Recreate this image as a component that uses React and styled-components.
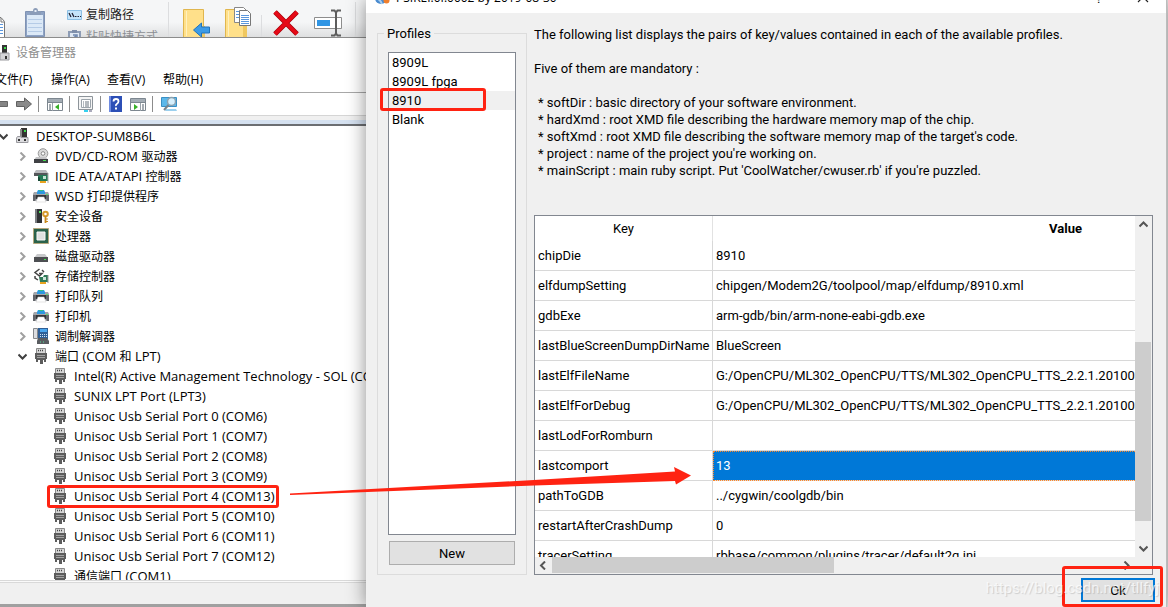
import React from 'react';
import styled, { createGlobalStyle, css } from 'styled-components';

const uiFont = '"Open Sans", "Noto Sans CJK SC", sans-serif';
const dialogFont = 'Roboto, "Noto Sans CJK SC", sans-serif';
const red = '#ff2312';

const GlobalStyle = createGlobalStyle`
  * { box-sizing: border-box; }
  body { margin: 0; background: #e9e9e9; color: #000; overflow: hidden; }
  button { font: inherit; color: inherit; }
  svg { display: block; flex: none; }
`;

/* ---------- page ---------- */

const Desktop = styled.div`
  position: relative;
  display: grid;
  grid-template-columns: 366px minmax(0, 1fr);
  height: 100vh;
  overflow: hidden;
`;

const Behind = styled.div`
  display: flex;
  flex-direction: column;
  min-width: 0;
  min-height: 0;
  overflow: hidden;
  background: #a0a0a0;
  font: 13px/20px ${uiFont};
`;

/* ---------- explorer ribbon ---------- */

const Ribbon = styled.div`
  display: flex;
  align-items: flex-start;
  flex: none;
  height: 38px;
  overflow: hidden;
  background: linear-gradient(#f5f6f7 60%, #dfe0e1);
  border-bottom: 1px solid #8c8c8c;
  font-size: 12px;
`;

const PasteIcons = styled.div`
  display: flex;
  gap: 18px;
  width: 67px;
`;

const RibbonCommands = styled.div`
  display: flex;
  flex-direction: column;
  gap: 2px;
  width: 101px;
  padding-top: 5px;
`;

const RibbonCommand = styled.button`
  display: flex;
  align-items: center;
  gap: 4px;
  height: 20px;
  padding: 0;
  border: 0;
  background: none;
  white-space: nowrap;
  color: ${(p) => (p.$muted ? '#8b8f94' : '#222')};
`;

const RibbonTools = styled.div`
  display: flex;
  padding-left: ${(p) => p.$lead}px;
`;

const RibbonTool = styled.button`
  width: ${(p) => p.$width}px;
  padding: 0;
  border: 0;
  background: none;
`;

const RibbonDivider = styled.span`
  width: 1px;
  height: 38px;
  margin-top: ${(p) => p.$top || 2}px;
  background: #dcdddf;
`;

/* ---------- device manager ---------- */

const Manager = styled.section`
  display: flex;
  flex-direction: column;
  flex: 1;
  min-height: 0;
  margin-bottom: 3px;
  background: #fff;
`;

const ManagerTitle = styled.header`
  display: flex;
  align-items: center;
  gap: 6px;
  height: 29px;
  padding-right: 8px;
  color: #8f8f8f;
  font-size: 12px;
`;

const MenuBar = styled.nav`
  display: flex;
  height: 26px;
  font-size: 12px;
  border-bottom: 1px solid #a8a8a8;
`;

const MenuItem = styled.button`
  width: 56px;
  padding: 2px 0;
  border: 0;
  background: none;
  text-align: left;
  line-height: 20px;
  white-space: nowrap;
`;

const MenuShift = styled.div`
  display: flex;
  margin-left: -5px;
`;

const ToolBar = styled.div`
  display: flex;
  align-items: center;
  height: 23px;
  border-bottom: 1px solid #d5d5d5;
`;

const ToolGroup = styled.div`
  display: flex;
  gap: 8px;
  padding: 0 6px 0 8px;
  & + & { border-left: 1px solid #8c8c8c; }
`;

const ToolButton = styled.button`
  padding: 0;
  border: 0;
  background: none;
`;

const TreeHeader = styled.div`
  height: 10px;
  background: linear-gradient(#f0f0f0 4px, #d5e1f0 4px);
  border-bottom: 2px solid #6c6e72;
  flex: none;
`;

const Tree = styled.ul`
  flex: 1;
  min-height: 0;
  margin: 0;
  padding: 0;
  overflow: hidden;
  list-style: none;
`;

const TreeRow = styled.li`
  position: relative;
  display: flex;
  align-items: center;
  height: 20px;
  padding-left: ${(p) => p.$level * 19}px;
  white-space: nowrap;
`;

const Expander = styled.span`
  display: flex;
  flex: none;
  width: 8px;
  margin-right: 6px;
  justify-content: flex-end;
`;

const TreeLabel = styled.span`
  padding-left: 6px;
`;

const Han = styled.span`
  font-size: 12px;
`;

const StatusBar = styled.footer`
  flex: none;
  height: 24px;
  background: #f0f0f0;
  border-top: 1px solid #d9d9d9;
  box-shadow: inset 0 1px #fafafa, inset 0 2px #d9d9d9;
`;

/* ---------- profile dialog ---------- */

const Dialog = styled.section`
  position: relative;
  display: flex;
  flex-direction: column;
  min-width: 0;
  min-height: 0;
  margin-right: 1px;
  background: #f0f0f0;
  border-right: 1px solid #bcbcbc;
  box-shadow: 0 0 18px rgba(0, 0, 0, 0.45);
  font: 13px/17px ${dialogFont};
`;

const DialogTitle = styled.header`
  display: flex;
  align-items: flex-end;
  justify-content: space-between;
  flex: none;
  height: 13px;
  padding: 0 16px 7px 8px;
  overflow: hidden;
  background: #fff;
`;

const TitleText = styled.div`
  display: flex;
  align-items: flex-end;
  gap: 6px;
  font: 12px/17px "Open Sans", sans-serif;
`;

const WindowButtons = styled.div`
  display: flex;
  gap: 34px;
  align-items: flex-end;
`;

const WindowButton = styled.button`
  padding: 0;
  border: 0;
  background: none;
  line-height: 14px;
`;

const DialogBody = styled.div`
  display: flex;
  gap: 7px;
  flex: 1;
  min-height: 0;
  padding: 12px 13px 0 11px;
`;

const ProfileBox = styled.fieldset`
  display: flex;
  flex-direction: column;
  gap: 6px;
  flex: none;
  width: 150px;
  min-width: 0;
  margin: 0;
  padding: 10px 10px 9px;
  border: 1px solid #dcdcdc;
`;

const Legend = styled.legend`
  margin-left: -4px;
  padding: 0 3px;
`;

const ProfileList = styled.ul`
  flex: 1;
  min-height: 0;
  margin: 0;
  padding: 0;
  list-style: none;
  background: #fff;
  border: 1px solid #828790;
`;

const Profile = styled.li`
  position: relative;
  height: 19px;
  padding-left: 3px;
  line-height: 19px;
  background: ${(p) => (p.$selected ? '#f0f0f0' : 'none')};
`;

const NewButton = styled.button`
  height: 24px;
  margin: 0 1px;
  padding: 0;
  background: #e1e1e1;
  border: 1px solid #adadad;
`;

const Details = styled.div`
  display: flex;
  flex-direction: column;
  gap: 36px;
  flex: 1;
  min-width: 0;
`;

const Help = styled.div`
  padding-top: 1px;
  white-space: nowrap;
`;

const HelpText = styled.p`
  margin: 0 0 17px;
`;

const HelpList = styled.ul`
  margin: 0;
  padding: 0 0 0 4px;
  list-style: none;
`;

const Grid = styled.div`
  display: grid;
  grid-template-columns: minmax(0, 1fr) 17px;
  grid-template-rows: minmax(0, 1fr) 17px;
  flex: 1;
  min-height: 0;
  background: #f0f0f0;
  border: 1px solid #828790;
`;

const Viewport = styled.div`
  overflow: hidden;
  background: #fff;
`;

const Table = styled.table`
  width: 884px;
  table-layout: fixed;
  border-collapse: separate;
  border-spacing: 0;
`;

const HeadCell = styled.th`
  width: ${(p) => p.$width}px;
  height: 25px;
  padding: 0;
  font-weight: ${(p) => (p.$strong ? 700 : 400)};
  border-right: 1px solid #e2e2e2;
`;

const Cell = styled.td`
  height: 30px;
  padding: 0 3px;
  white-space: nowrap;
  border-right: 1px solid #d8d8d8;
  border-bottom: 1px solid #d8d8d8;
  ${(p) => p.$selected && css`
    color: #fff;
    background: #0078d7;
    outline: 1px dotted #ff8728;
    outline-offset: -1px;
  `}
`;

const VScroll = styled.div`
  display: grid;
  grid-template-rows: 17px 109fr 179fr 19fr 17px;
  padding-right: 1px;
`;

const HScroll = styled.div`
  display: grid;
  grid-template-columns: 17px 282fr 285fr 17px;
  padding-bottom: 1px;
`;

const Thumb = styled.span`
  background: #cdcdcd;
`;

const ScrollButton = styled.button`
  display: grid;
  place-items: center;
  padding: 0;
  border: 0;
  background: none;
`;

const DialogFooter = styled.footer`
  display: flex;
  justify-content: flex-end;
  flex: none;
  height: 32px;
  padding: 3px 11px 5px;
`;

const OkSlot = styled.div`
  position: relative;
`;

const OkButton = styled.button`
  width: 74px;
  height: 24px;
  padding: 0;
  background: #e1e1e1;
  border: 2px solid #0078d7;
`;

/* ---------- annotations lying over the windows ---------- */

const Mark = styled.span`
  position: absolute;
  border: 3px solid ${red};
  border-radius: 3px;
  pointer-events: none;
`;
const PortMark = styled(Mark)`
  inset: -1px auto -2px 47px;
  width: 232px;
`;
const ProfileMark = styled(Mark)`
  inset: -3px 29px -1px -9px;
`;
const OkMark = styled(Mark)`
  inset: -12px -8px -5px -19px;
`;

const Watermark = styled.span`
  position: absolute;
  right: 7px;
  bottom: 9px;
  font: 15px/20px Roboto, sans-serif;
  color: rgba(255, 255, 255, 0.7);
  text-shadow: 1px 1px 1px rgba(0, 0, 0, 0.15);
  pointer-events: none;
`;

const ArrowLayer = styled.svg`
  position: absolute;
  top: 466px;
  left: 288px;
  pointer-events: none;
`;

/* ---------- icons ---------- */

const Svg = ({ w = 16, h = 16, children }) => (
  <svg width={w} height={h} viewBox={`0 0 ${w} ${h}`} aria-hidden="true">{children}</svg>
);

const Chevron = ({ d, color = '#404040', width = 2 }) => (
  <Svg w={9} h={9}><path d={d} fill="none" stroke={color} strokeWidth={width} /></Svg>
);
const right = 'M2.5 0.5l4 4-4 4';
const left = 'M6 0.5l-4 4 4 4';
const down = 'M0.5 2.5l4 4 4-4';
const up = 'M0.5 6.5l4-4 4 4';

const ComputerIcon = () => (
  <Svg>
    <path d="M7 0h6v10H7z" fill="#333" /><path d="M6 1h2v8H6z" fill="#8a8a8a" />
    <path d="M10 2h2v2h-2z" fill="#3ddc4a" />
    <path d="M3.500 8.500H7v1h7v5H2.500V10z" fill="#dcdcdf" stroke="#99999e" />
    <path d="M4 11h2v2H4zM10 11h2v2h-2z" fill="#333" />
  </Svg>
);
const DiscIcon = () => (
  <Svg>
    <circle cx="10" cy="5.500" r="4.800" fill="#d9d9d9" stroke="#9a9a9a" /><circle cx="10" cy="5.500" r="1.800" fill="#fff" stroke="#888" />
    <path d="M3 9h10l2 3H1z" fill="#c4c4c6" /><path d="M1 11h14v4H1z" fill="#3f4144" /><path d="M10 12h3v1h-3z" fill="#42e04e" />
  </Svg>
);
const IdeIcon = () => (
  <Svg>
    <path d="M3 2h10l2 3H1z" fill="#b9babd" /><path d="M1 5h14v3H1z" fill="#55575a" />
    <path d="M5 7h10v6H6z" fill="#257a55" /><path d="M10 8h3v3h-3z" fill="#c5e4d4" /><path d="M5 8l2 2v3H5z" fill="#174a35" />
    <path d="M7 13h6v2H7z" fill="#e8a320" /><path d="M15 5v10" stroke="#aaa" />
  </Svg>
);
const PrinterIcon = () => (
  <Svg>
    <path d="M4 4l1-2h6l1 2v2H4z" fill="#2d9ae0" /><path d="M6 2h4v1H6z" fill="#39bd84" />
    <path d="M1 4h3v2h8V4h3l1 2v7H0V6z" fill="#a3a6ab" />
    <path d="M0 7h16v6h-2l-1-3H3l-1 3H0z" fill="#63666b" />
    <path d="M3 7h10v4H3z" fill="#35373a" /><path d="M5 9h6l2 5H3z" fill="#fff" stroke="#c9c9c9" strokeWidth=".5" />
    <path d="M13 6h2v1h-2z" fill="#58e36a" />
  </Svg>
);
const SecurityIcon = () => (
  <Svg>
    <path d="M2 1h7v14H2z" fill="#303234" /><path d="M2 1h2v14H2z" fill="#7c7f82" /><path d="M6 3h2v2H6z" fill="#4bdd58" />
    <circle cx="12.500" cy="6" r="2.300" fill="none" stroke="#d79a2b" strokeWidth="2" /><path d="M12.500 8v7" stroke="#c98a1c" strokeWidth="1.800" /><path d="M13 11h2M13 13.500h2" stroke="#c98a1c" />
  </Svg>
);
const CpuIcon = () => (
  <Svg>
    <path d="M.5.5h15v15H.5z" fill="#b9a66b" stroke="#8b7a45" strokeDasharray="1 1" /><path d="M1 1h14v14H1z" fill="#2a624b" />
    <path d="M4 4h8v8H4z" fill="#dfe1e0" stroke="#f8f8f8" />
  </Svg>
);
const DriveIcon = () => (
  <Svg>
    <path d="M4 6h8l3 4H1z" fill="#c8c9cb" /><path d="M1 9h14v5H1z" fill="#4d4f52" /><path d="M11 11h2v1h-2z" fill="#45e051" />
  </Svg>
);
const StorageIcon = () => (
  <Svg>
    <path d="M6.500 1L2 4.500 6.500 8 9 5.500H6M2 8v2l3 2M9 2l2 2" fill="none" stroke="#444" strokeWidth="1.500" />
    <path d="M6 9h4l1-2h4v7H7z" fill="#2f7a58" /><path d="M10 9h3v3h-3z" fill="#cfe5da" /><path d="M7 14h6v2H7z" fill="#e8a320" /><path d="M15 7v8" stroke="#999" />
  </Svg>
);
const ModemIcon = () => (
  <Svg>
    <path d="M.5.500h4v10h-4z" fill="#dcdde0" stroke="#85888c" /><path d="M5 0h10v11H5z" fill="#2f5f96" />
    <path d="M7 1h7v3H7z" fill="#4aa6ee" /><path d="M7 6.500h7M7 8.500h7" stroke="#cfe2f4" strokeDasharray="1 1" />
    <path d="M5 10h9l2 3v3H4v-3z" fill="#595c60" /><path d="M7 14h6" stroke="#58dd9a" strokeDasharray="1 2" />
  </Svg>
);
const PortIcon = () => (
  <Svg>
    <path d="M3.500.500h9v5h-9z" fill="#d6d6d6" stroke="#8a8a8a" /><path d="M5 2.500h6" stroke="#444" strokeDasharray="1 1" strokeWidth="1.400" />
    <path d="M2 5h12v6h-1v3h-2v-2h-1v4H7v-4H5v2H3v-3H2z" fill="#5c5c5c" /><path d="M4 7.500h8M4 9.500h8" stroke="#a2a2a2" />
  </Svg>
);
const deviceIcons = {
  computer: ComputerIcon, disc: DiscIcon, ide: IdeIcon, printer: PrinterIcon, security: SecurityIcon,
  cpu: CpuIcon, drive: DriveIcon, storage: StorageIcon, modem: ModemIcon, port: PortIcon,
};

const CutDocIcon = () => (
  <Svg w={7} h={38}>
    <path d="M-8 17.500h9l3.500 4V37.500H-8z" fill="#fff" stroke="#777" /><path d="M1 18v4h3" fill="none" stroke="#777" />
    <path d="M0 24.500h3M0 27.500h3M0 30.500h3M0 33.500h3" stroke="#5b97dd" />
  </Svg>
);
const ClipboardIcon = () => (
  <Svg w={21} h={38}>
    <path d="M.5 11.500h19v25H.5z" fill="#8ea3c4" stroke="#7f92b3" /><path d="M2 15h16v20H2z" fill="#dce9f7" />
    <path d="M3 19.500h14M3 23.500h14M3 27.500h14M3 31.500h14" stroke="#b5cbe6" />
    <path d="M5 15v-4h3q0-3 2.500-3T13 11h3v4z" fill="#8b9cb8" /><path d="M9.500 10h2v2h-2z" fill="#e6edf6" />
  </Svg>
);
const PathIcon = () => (
  <Svg w={15} h={10}>
    <path d="M.5.5h14v9H.5z" fill="#c5e4fa" stroke="#8bbfe4" /><path d="M2 3l2 4M5 3l2 4" stroke="#223" strokeWidth="1.300" /><path d="M8 6.500h1.500M10.500 6.500h1.500M13 6.500h1" stroke="#223" />
  </Svg>
);
const ShortcutIcon = () => (
  <Svg w={15} h={14}>
    <path d="M2 2h11v12H2z" fill="#dfe8f3" stroke="#8d9cb5" strokeWidth="2" /><path d="M5 0h5v3H5z" fill="#7e8eaa" />
    <path d="M5 11V9l4-3M6 5h4v4" fill="none" stroke="#6f86ae" strokeWidth="1.500" />
  </Svg>
);
const Folder = () => (
  <>
    <path d="M.5 9.500h20v28H.5z" fill="#ffe08a" stroke="#e0b64e" /><path d="M3.500 11v25" stroke="#fff0bd" /><path d="M18 26h4v12h-4z" fill="#f0c860" />
  </>
);
const MoveIcon = () => (
  <Svg w={28} h={38}>
    <Folder /><path d="M10.500 30l8-7v4h8v6h-8v4z" fill="#3c9be6" stroke="#2273bb" />
  </Svg>
);
const CopyToIcon = () => (
  <Svg w={28} h={38}>
    <Folder />
    <path d="M9.500 7.500h9l3 3v12h-12z" fill="#fff" stroke="#888" /><path d="M11 11.500h4M11 14.500h4M11 17.500h4" stroke="#5b97dd" />
    <path d="M14.500 10.500h8l3 3v12h-11z" fill="#fff" stroke="#777" /><path d="M16 15.500h8M16 17.500h8M16 19.500h8M16 21.500h8M16 23.500h8" stroke="#5b97dd" />
  </Svg>
);
const DeleteIcon = () => (
  <Svg w={26} h={38}><path d="M2 12l22 22M24 12L2 34" stroke="#a8000a" strokeWidth="5" /><path d="M2 12l22 22M24 12L2 34" stroke="#e60a17" strokeWidth="3.600" /></Svg>
);
const RenameIcon = () => (
  <Svg w={28} h={38}>
    <path d="M.5 17.500h27v11H.5z" fill="#fff" stroke="#8d8d8d" /><path d="M3 20h13v6H3z" fill="#2f95e4" />
    <path d="M17 10.500h3.500l1.500 2 1.500-2H27M22 12v22M17 35.500h3.500l1.500-2 1.500 2H27" fill="none" stroke="#5d5d5d" strokeWidth="2" />
  </Svg>
);

const BackIcon = () => <Svg w={8}><path d="M-4 5.500H7.500v5H-4z" fill="#858585" stroke="#666" /></Svg>;
const ForwardIcon = () => <Svg><path d="M.5 5.500h8V2l7 6-7 6v-3.500h-8z" fill="#8a8a8a" stroke="#606060" /></Svg>;
const PaneIcon = ({ flip }) => (
  <Svg>
    <path d="M.5 2.500h15v12H.5z" fill="#fff" stroke="#7d8790" /><path d="M1 3h14v3H1z" fill="#a4adb5" /><path d="M1 6.500h14" stroke="#7d8790" />
    <path d={flip ? 'M10.500 7v8' : 'M5.500 7v8'} stroke="#9aa3ab" />
    <path d={flip ? 'M12 9h2M12 11h2M12 13h2' : 'M2 9h2M2 11h2M2 13h2'} stroke="#4c5a66" />
    <path d={flip ? 'M4 8v6l4-3z' : 'M12 8v6l-4-3z'} fill="#37b027" />
  </Svg>
);
const PropertiesIcon = () => (
  <Svg>
    <path d="M.5.500h14v13H.5z" fill="#f5f5f5" stroke="#8d949a" /><path d="M3.500 3.500h9v8h-9z" fill="#fff" stroke="#9ca4ab" />
    <path d="M5 6h1M7 6h4M5 8h1M7 8h4M5 10h1M7 10h4" stroke="#6b757f" /><path d="M6 14h4v2H6z" fill="#35d0ef" /><path d="M11 14h3v2h-3z" fill="#aab" />
  </Svg>
);
const HelpIcon = () => (
  <Svg w={13}>
    <path d="M0 0h13v16H0z" fill="#2c4fb6" /><path d="M0 0h2v16H0z" fill="#6f8be0" />
    <path d="M4.500 5.500q0-2.500 2.500-2.500t2.500 2.300q0 1.500-1.500 2.400T7 10" fill="none" stroke="#fff" strokeWidth="1.800" /><path d="M6 11.500h2v2H6z" fill="#fff" />
  </Svg>
);
const ScanIcon = () => (
  <Svg w={17}>
    <path d="M.5 1.500h15v9H.5z" fill="#5cb8ea" stroke="#3a8fc4" /><path d="M5 13h10l1 2H4z" fill="#9bd0ee" />
    <circle cx="10.500" cy="5.500" r="4" fill="#d6effc" stroke="#8aa0ae" strokeWidth="1.400" /><path d="M7.500 9L3 14" stroke="#77838c" strokeWidth="2" />
  </Svg>
);
const AppIcon = () => (
  <Svg>
    <circle cx="7" cy="8" r="6" fill="#4a8bd0" /><path d="M2 8q4 1 6 6" stroke="#a8d0f0" strokeWidth="2" fill="none" /><circle cx="12.500" cy="10.500" r="3" fill="#f07f2c" />
  </Svg>
);

/* ---------- data ---------- */

const devices = [
  [0, 'computer', 'DESKTOP-SUM8B6L', 'open'],
  [1, 'disc', 'DVD/CD-ROM 驱动器', 'closed'],
  [1, 'ide', 'IDE ATA/ATAPI 控制器', 'closed'],
  [1, 'printer', 'WSD 打印提供程序', 'closed'],
  [1, 'security', '安全设备', 'closed'],
  [1, 'cpu', '处理器', 'closed'],
  [1, 'drive', '磁盘驱动器', 'closed'],
  [1, 'storage', '存储控制器', 'closed'],
  [1, 'printer', '打印队列', 'closed'],
  [1, 'printer', '打印机', 'closed'],
  [1, 'modem', '调制解调器', 'closed'],
  [1, 'port', '端口 (COM 和 LPT)', 'open'],
  [2, 'port', 'Intel(R) Active Management Technology - SOL (COM3)'],
  [2, 'port', 'SUNIX LPT Port (LPT3)'],
  [2, 'port', 'Unisoc Usb Serial Port 0 (COM6)'],
  [2, 'port', 'Unisoc Usb Serial Port 1 (COM7)'],
  [2, 'port', 'Unisoc Usb Serial Port 2 (COM8)'],
  [2, 'port', 'Unisoc Usb Serial Port 3 (COM9)'],
  [2, 'port', 'Unisoc Usb Serial Port 4 (COM13)', null, true],
  [2, 'port', 'Unisoc Usb Serial Port 5 (COM10)'],
  [2, 'port', 'Unisoc Usb Serial Port 6 (COM11)'],
  [2, 'port', 'Unisoc Usb Serial Port 7 (COM12)'],
  [2, 'port', '通信端口 (COM1)'],
];

const profiles = ['8909L', '8909L fpga', '8910', 'Blank'];

const mandatory = [
  'softDir : basic directory of your software environment.',
  'hardXmd : root XMD file describing the hardware memory map of the chip.',
  "softXmd : root XMD file describing the software memory map of the target's code.",
  "project : name of the project you're working on.",
  "mainScript : main ruby script. Put 'CoolWatcher/cwuser.rb' if you're puzzled.",
];

const settings = [
  ['chipDie', '8910'],
  ['elfdumpSetting', 'chipgen/Modem2G/toolpool/map/elfdump/8910.xml'],
  ['gdbExe', 'arm-gdb/bin/arm-none-eabi-gdb.exe'],
  ['lastBlueScreenDumpDirName', 'BlueScreen'],
  ['lastElfFileName', 'G:/OpenCPU/ML302_OpenCPU/TTS/ML302_OpenCPU_TTS_2.2.1.2010091'],
  ['lastElfForDebug', 'G:/OpenCPU/ML302_OpenCPU/TTS/ML302_OpenCPU_TTS_2.2.1.2010091'],
  ['lastLodForRomburn', ''],
  ['lastcomport', '13'],
  ['pathToGDB', '../cygwin/coolgdb/bin'],
  ['restartAfterCrashDump', '0'],
  ['tracerSetting', 'rbbase/common/plugins/tracer/default2g.ini'],
];

/* Chinese runs are set one size smaller than the Latin text beside them. */
const mixed = (text) =>
  text.split(/([\u4e00-\u9fff]+)/).filter(Boolean).map((part, i) =>
    /[\u4e00-\u9fff]/.test(part) ? <Han key={i}>{part}</Han> : part);

function DeviceRow({ level, icon, label, state, marked }) {
  const Icon = deviceIcons[icon];
  return (
    <TreeRow $level={level} role="treeitem">
      <Expander>
        {state === 'open' && <Chevron d={down} />}
        {state === 'closed' && <Chevron d={right} color="#a0a0a0" />}
      </Expander>
      <Icon />
      <TreeLabel>{mixed(label)}</TreeLabel>
      {marked && <PortMark />}
    </TreeRow>
  );
}

function DeviceManager() {
  return (
    <Manager>
      <ManagerTitle>
        <Svg w={10}>
          <path d="M2 0h5v9H2z" fill="#333" /><path d="M4 2h2v2H4z" fill="#3ddc4a" />
          <path d="M0 8h9v7H0z" fill="#d5d5d8" stroke="#99999e" /><path d="M5 11h2v3H5z" fill="#333" />
        </Svg>
        设备管理器
      </ManagerTitle>
      <MenuBar>
        <MenuShift>
          {['文件(F)', '操作(A)', '查看(V)', '帮助(H)'].map((m) => <MenuItem key={m}>{m}</MenuItem>)}
        </MenuShift>
      </MenuBar>
      <ToolBar>
        <ToolButton aria-label="Back"><BackIcon /></ToolButton>
        <ToolGroup><ToolButton aria-label="Forward"><ForwardIcon /></ToolButton></ToolGroup>
        <ToolGroup><ToolButton aria-label="Console tree"><PaneIcon /></ToolButton></ToolGroup>
        <ToolGroup><ToolButton aria-label="Properties"><PropertiesIcon /></ToolButton></ToolGroup>
        <ToolGroup>
          <ToolButton aria-label="Help"><HelpIcon /></ToolButton>
          <ToolButton aria-label="Action pane"><PaneIcon flip /></ToolButton>
        </ToolGroup>
        <ToolGroup><ToolButton aria-label="Scan"><ScanIcon /></ToolButton></ToolGroup>
      </ToolBar>
      <TreeHeader />
      <Tree role="tree">
        {devices.map(([level, icon, label, state, marked]) => (
          <DeviceRow key={label} level={level} icon={icon} label={label} state={state} marked={marked} />
        ))}
      </Tree>
      <StatusBar />
    </Manager>
  );
}

function ProfileDialog() {
  return (
    <Dialog>
      <DialogTitle>
        <TitleText><AppIcon />PSIKEI.0I.0002 by 2019-08-30</TitleText>
        <WindowButtons>
          <WindowButton aria-label="Help">?</WindowButton>
          <WindowButton aria-label="Close">
            <Svg w={14} h={14}><path d="M2 0l10 10M12 0L2 10" stroke="#222" strokeWidth="1.200" /></Svg>
          </WindowButton>
        </WindowButtons>
      </DialogTitle>
      <DialogBody>
        <ProfileBox>
          <Legend>Profiles</Legend>
          <ProfileList role="listbox" aria-label="Profiles">
            {profiles.map((p) => (
              <Profile key={p} role="option" aria-selected={p === '8910'} $selected={p === '8910'}>
                {p}
                {p === '8910' && <ProfileMark />}
              </Profile>
            ))}
          </ProfileList>
          <NewButton>New</NewButton>
        </ProfileBox>
        <Details>
          <Help>
            <HelpText>The following list displays the pairs of key/values contained in each of the available profiles.</HelpText>
            <HelpText>Five of them are mandatory :</HelpText>
            <HelpList>{mandatory.map((m) => <li key={m}>* {m}</li>)}</HelpList>
          </Help>
          <Grid>
            <Viewport>
              <Table>
                <thead>
                  <tr><HeadCell $width={178}>Key</HeadCell><HeadCell $width={706} $strong>Value</HeadCell></tr>
                </thead>
                <tbody>
                  {settings.map(([key, value]) => (
                    <tr key={key}><Cell>{key}</Cell><Cell $selected={key === 'lastcomport'}>{value}</Cell></tr>
                  ))}
                </tbody>
              </Table>
            </Viewport>
            <VScroll>
              <ScrollButton aria-label="Scroll up"><Chevron d={up} color="#555" /></ScrollButton>
              <span /><Thumb /><span />
              <ScrollButton aria-label="Scroll down"><Chevron d={down} color="#555" /></ScrollButton>
            </VScroll>
            <HScroll>
              <ScrollButton aria-label="Scroll left"><Chevron d={left} color="#555" /></ScrollButton>
              <Thumb /><span />
              <ScrollButton aria-label="Scroll right"><Chevron d={right} color="#555" /></ScrollButton>
            </HScroll>
          </Grid>
        </Details>
      </DialogBody>
      <DialogFooter>
        <OkSlot><OkButton>Ok</OkButton><OkMark /></OkSlot>
      </DialogFooter>
      <Watermark>https://blog.csdn.net/tllfyj</Watermark>
    </Dialog>
  );
}

export default function App() {
  return (
    <>
      <GlobalStyle />
      <Desktop>
        <Behind>
          <Ribbon>
            <PasteIcons><CutDocIcon /><ClipboardIcon /></PasteIcons>
            <RibbonCommands>
              <RibbonCommand><PathIcon />复制路径</RibbonCommand>
              <RibbonCommand $muted><ShortcutIcon />粘贴快捷方式</RibbonCommand>
            </RibbonCommands>
            <RibbonDivider />
            <RibbonTools $lead={14}>
              <RibbonTool $width={42} aria-label="Move to"><MoveIcon /></RibbonTool>
              <RibbonTool $width={36} aria-label="Copy to"><CopyToIcon /></RibbonTool>
            </RibbonTools>
            <RibbonDivider $top={15} />
            <RibbonTools $lead={11}>
              <RibbonTool $width={41} aria-label="Delete"><DeleteIcon /></RibbonTool>
              <RibbonTool $width={41} aria-label="Rename"><RenameIcon /></RibbonTool>
            </RibbonTools>
            <RibbonDivider />
          </Ribbon>
          <DeviceManager />
        </Behind>
        <ProfileDialog />
        <ArrowLayer width="404" height="32" viewBox="288 466 404 32" aria-hidden="true">
          <path d="M290 493.500L534 480 675 471.500 674 467 691 475.500 676 484.500 675 481 534 485.500 290 495z" fill={red} />
        </ArrowLayer>
      </Desktop>
    </>
  );
}
